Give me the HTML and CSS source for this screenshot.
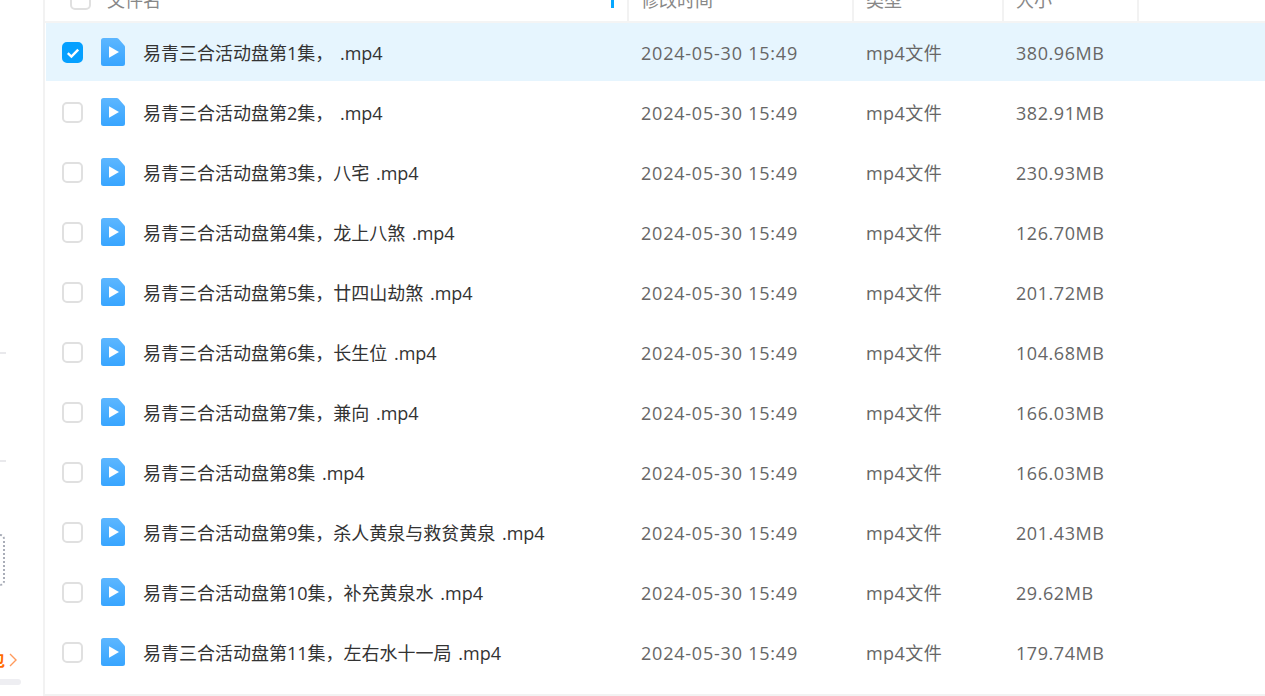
FILE: index.html
```html
<!DOCTYPE html>
<html lang="zh-CN">
<head>
<meta charset="utf-8">
<title>文件列表</title>
<link rel="stylesheet" href="styles.css">
</head>
<body>
<svg class="defs" width="0" height="0" aria-hidden="true">
  <defs>
    <linearGradient id="fileFill" x1="0" y1="0" x2="0" y2="1"><stop offset="0" stop-color="#5cb6ff"/><stop offset="1" stop-color="#38a5ff"/></linearGradient>
    <symbol id="video" viewBox="0 0 24 28"><path d="M2.5 0h13.2c.7 0 1.3.3 1.8.8l5.7 6.4c.5.5.8 1.1.8 1.8v16.5a2.5 2.5 0 0 1-2.5 2.5h-19A2.5 2.5 0 0 1 0 25.500V2.500A2.500 2.500 0 0 1 2.500 0z" fill="url(#fileFill)"/><path d="M8 8.200v11.600l10-5.800z" fill="#fff"/></symbol>
  </defs>
</svg>
<div class="app">
  <aside class="side">
    <div class="side-rule first"></div>
    <div class="side-rule second"></div>
    <div class="side-dash"></div>
    <div class="side-promo"><span class="promo-text">包</span><svg class="promo-arrow" width="8" height="14" viewBox="0 0 8 14"><path d="M1 1l6 6-6 6" fill="none" stroke="#ff9a5c" stroke-width="1.4"/></svg></div>
    <div class="side-bar"></div>
  </aside>
  <main class="main">
    <div class="head">
      <div class="hcell c-name"><span class="box"></span><span class="htext">文件名</span><span class="sort"></span></div>
      <div class="hcell c-time"><span class="htext">修改时间</span></div>
      <div class="hcell c-type"><span class="htext">类型</span></div>
      <div class="hcell c-size"><span class="htext">大小</span></div>
    </div>
    <div class="rows">
      <div class="row selected">
        <div class="c-name cell"><span class="box checked"><svg width="14" height="12" viewBox="0 0 14 12"><path d="M1.800 6.200l3.600 3.400 6.800-7" fill="none" stroke="#fff" stroke-width="2.400"/></svg></span><svg class="ficon"><use href="#video"/></svg><span class="fname">易青三合活动盘第1集， .mp4</span></div>
        <div class="c-time cell">2024-05-30 15:49</div><div class="c-type cell">mp4文件</div><div class="c-size cell">380.96MB</div>
      </div>
      <div class="row"><div class="c-name cell"><span class="box"></span><svg class="ficon"><use href="#video"/></svg><span class="fname">易青三合活动盘第2集， .mp4</span></div><div class="c-time cell">2024-05-30 15:49</div><div class="c-type cell">mp4文件</div><div class="c-size cell">382.91MB</div></div>
      <div class="row"><div class="c-name cell"><span class="box"></span><svg class="ficon"><use href="#video"/></svg><span class="fname">易青三合活动盘第3集，八宅 .mp4</span></div><div class="c-time cell">2024-05-30 15:49</div><div class="c-type cell">mp4文件</div><div class="c-size cell">230.93MB</div></div>
      <div class="row"><div class="c-name cell"><span class="box"></span><svg class="ficon"><use href="#video"/></svg><span class="fname">易青三合活动盘第4集，龙上八煞 .mp4</span></div><div class="c-time cell">2024-05-30 15:49</div><div class="c-type cell">mp4文件</div><div class="c-size cell">126.70MB</div></div>
      <div class="row"><div class="c-name cell"><span class="box"></span><svg class="ficon"><use href="#video"/></svg><span class="fname">易青三合活动盘第5集，廿四山劫煞 .mp4</span></div><div class="c-time cell">2024-05-30 15:49</div><div class="c-type cell">mp4文件</div><div class="c-size cell">201.72MB</div></div>
      <div class="row"><div class="c-name cell"><span class="box"></span><svg class="ficon"><use href="#video"/></svg><span class="fname">易青三合活动盘第6集，长生位 .mp4</span></div><div class="c-time cell">2024-05-30 15:49</div><div class="c-type cell">mp4文件</div><div class="c-size cell">104.68MB</div></div>
      <div class="row"><div class="c-name cell"><span class="box"></span><svg class="ficon"><use href="#video"/></svg><span class="fname">易青三合活动盘第7集，兼向 .mp4</span></div><div class="c-time cell">2024-05-30 15:49</div><div class="c-type cell">mp4文件</div><div class="c-size cell">166.03MB</div></div>
      <div class="row"><div class="c-name cell"><span class="box"></span><svg class="ficon"><use href="#video"/></svg><span class="fname">易青三合活动盘第8集 .mp4</span></div><div class="c-time cell">2024-05-30 15:49</div><div class="c-type cell">mp4文件</div><div class="c-size cell">166.03MB</div></div>
      <div class="row"><div class="c-name cell"><span class="box"></span><svg class="ficon"><use href="#video"/></svg><span class="fname">易青三合活动盘第9集，杀人黄泉与救贫黄泉 .mp4</span></div><div class="c-time cell">2024-05-30 15:49</div><div class="c-type cell">mp4文件</div><div class="c-size cell">201.43MB</div></div>
      <div class="row"><div class="c-name cell"><span class="box"></span><svg class="ficon"><use href="#video"/></svg><span class="fname">易青三合活动盘第10集，补充黄泉水 .mp4</span></div><div class="c-time cell">2024-05-30 15:49</div><div class="c-type cell">mp4文件</div><div class="c-size cell">29.62MB</div></div>
      <div class="row"><div class="c-name cell"><span class="box"></span><svg class="ficon"><use href="#video"/></svg><span class="fname">易青三合活动盘第11集，左右水十一局 .mp4</span></div><div class="c-time cell">2024-05-30 15:49</div><div class="c-type cell">mp4文件</div><div class="c-size cell">179.74MB</div></div>
    </div>
  </main>
</div>
</body>
</html>
```
FILE: styles.css
```css
* { box-sizing: border-box; }
html, body { margin: 0; height: 100%; overflow: hidden; background: #fff; }
body { font-family: "Open Sans", "Noto Sans CJK SC", "Liberation Sans", sans-serif; font-size: 18px; color: #666; }
.defs { position: absolute; }
.app { display: flex; height: 696px; }

.side { width: 43px; flex: none; display: flex; flex-direction: column; overflow: hidden; }
.side-rule { width: 6px; height: 2px; background: #e9e9ec; }
.side-rule.first { margin-top: 352px; }
.side-rule.second { margin-top: 106px; }
.side-dash { width: 10px; height: 52px; margin-top: 72px; margin-left: -5px; border: 2px dotted #a9adb8; border-radius: 5px; }
.side-promo { display: flex; align-items: center; height: 16px; margin-top: 66px; }
.promo-text { width: 5px; margin-right: 4px; overflow: hidden; direction: rtl; color: #ff6a00; font-size: 16px; line-height: 16px; font-weight: 700; white-space: nowrap; }
.promo-arrow { flex: none; }
.side-bar { width: 21px; height: 6px; margin-top: 11px; border-radius: 0 3px 3px 0; background: #eeeef2; }

.main { width: 1222px; height: 696px; border-left: 2px solid #f2f2f2; border-bottom: 2px solid #f2f2f2; overflow: hidden; }

.head { display: flex; height: 23px; border-bottom: 2px solid #f4f4f4; }
.hcell { display: flex; align-items: flex-end; height: 21px; border-right: 2px solid #f2f2f2; overflow: hidden; color: #888; }
.htext { line-height: 24px; margin-bottom: 9px; white-space: nowrap; }
.head .c-name { padding-left: 25px; position: relative; }
.head .box { margin-bottom: 11px; flex: none; }
.head .c-name .htext { margin-left: 16px; }
.sort { position: absolute; right: 13px; top: 0; width: 3px; height: 8px; background: #06a7ff; }

.c-name { width: 584px; }
.c-time { width: 225px; padding-left: 12px; }
.c-type { width: 150px; padding-left: 12px; }
.c-size { width: 135px; padding-left: 12px; }

.rows { display: flex; flex-direction: column; margin-left: 1px; }
.row { display: flex; height: 58px; margin-bottom: 2px; }
.row.selected { background: #e6f5fe; }
.cell { display: flex; align-items: center; white-space: nowrap; line-height: 24px; padding-top: 2px; }
.cell.c-name { width: 583px; padding-left: 16px; color: #333; }
.cell.c-time { letter-spacing: .78px; }
.cell.c-type { letter-spacing: .45px; }
.cell.c-size { letter-spacing: .55px; }

.box { display: inline-flex; align-items: center; justify-content: center; width: 21px; height: 21px; flex: none; border: 2px solid #e0e0e0; border-radius: 5px; background: #fff; }
.row .box { margin-top: -1px; }
.box.checked { border-color: #06a0ff; background: #06a0ff; }
.ficon { width: 24px; height: 28px; flex: none; margin-left: 18px; margin-top: -2px; }
.fname { margin-left: 18px; word-spacing: 2px; }
```
